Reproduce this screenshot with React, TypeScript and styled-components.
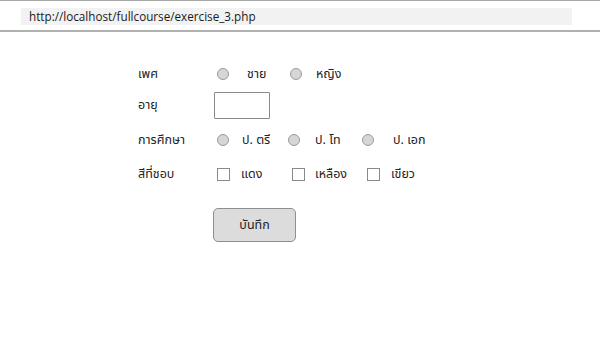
import React from "react";
import styled, { createGlobalStyle } from "styled-components";

const Global = createGlobalStyle`
  html, body { margin: 0; padding: 0; background: #fff; }
  body { font-family: "Noto Sans", "Noto Sans Thai", "Noto Sans Thai UI", "DejaVu Sans", sans-serif; color: #222; }
`;

const Page = styled.div`
  width: 600px;
  height: 338px;
  overflow: hidden;
  border-top: 1px solid #a8a8a8;
  box-sizing: border-box;
`;

const Header = styled.div`
  height: 31px;
  padding: 7px 28px 0 21px;
  box-sizing: border-box;
  border-bottom: 2px solid #b0b0b0;
`;

const UrlBar = styled.div`
  height: 17px;
  background: #f2f2f2;
  padding-left: 8px;
  font-family: "Open Sans", "Liberation Sans", sans-serif;
  font-size: 11.7px;
  line-height: 17px;
  color: #1a1a1a;
`;

const Form = styled.div`
  padding: 31px 0 0 138px;
  display: flex;
  flex-direction: column;
`;

const Row = styled.div<{ $h: number }>`
  display: flex;
  align-items: center;
  height: ${(p) => p.$h}px;
`;

const Label = styled.div`
  width: 76px;
  font-size: 12.5px;
  color: #222;
`;

const Option = styled.div<{ $w: number; $gap: number }>`
  width: ${(p) => p.$w}px;
  display: flex;
  align-items: center;
  gap: ${(p) => p.$gap}px;
  font-size: 12.5px;
  padding-left: 3px;
  box-sizing: border-box;
`;

const Radio = styled.span`
  width: 12px;
  height: 12px;
  border-radius: 50%;
  background: #d6d6d6;
  border: 1px solid #9a9a9a;
  box-sizing: border-box;
  flex: none;
`;

const Check = styled.span`
  width: 13px;
  height: 13px;
  background: #fff;
  border: 1px solid #8a8a8a;
  box-sizing: border-box;
  flex: none;
`;

const TextBox = styled.div`
  width: 56px;
  height: 27px;
  border: 1px solid #8a8a8a;
  border-radius: 1px;
  box-sizing: border-box;
  background: #fff;
`;

const ButtonRow = styled.div`
  padding: 15px 0 0 75px;
`;

const SaveButton = styled.div`
  width: 83px;
  height: 34px;
  box-sizing: border-box;
  background: #dcdcdc;
  border: 1px solid #8f8f8f;
  border-radius: 5px;
  display: flex;
  align-items: center;
  justify-content: center;
  font-size: 12.5px;
  color: #222;
`;

export default function App() {
  return (
    <>
      <Global />
      <Page>
        <Header>
          <UrlBar>http://localhost/fullcourse/exercise_3.php</UrlBar>
        </Header>
        <Form>
          <Row $h={22}>
            <Label>เพศ</Label>
            <Option $w={73} $gap={18}><Radio />ชาย</Option>
            <Option $w={80} $gap={14}><Radio />หญิง</Option>
          </Row>
          <Row $h={40}>
            <Label>อายุ</Label>
            <TextBox />
          </Row>
          <Row $h={30}>
            <Label>การศึกษา</Label>
            <Option $w={71} $gap={13}><Radio />ป. ตรี</Option>
            <Option $w={74} $gap={15}><Radio />ป. โท</Option>
            <Option $w={80} $gap={19}><Radio />ป. เอก</Option>
          </Row>
          <Row $h={38}>
            <Label>สีที่ชอบ</Label>
            <Option $w={75} $gap={11}><Check />แดง</Option>
            <Option $w={75} $gap={10}><Check />เหลือง</Option>
            <Option $w={80} $gap={11}><Check />เขียว</Option>
          </Row>
          <ButtonRow>
            <SaveButton>บันทึก</SaveButton>
          </ButtonRow>
        </Form>
      </Page>
    </>
  );
}
